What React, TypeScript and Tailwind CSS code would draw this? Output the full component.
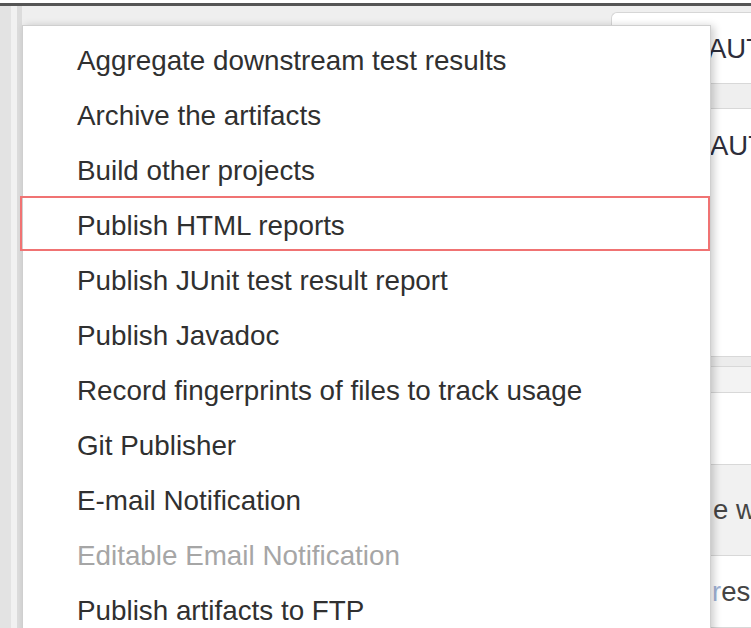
const items = [
  { label: "Aggregate downstream test results" },
  { label: "Archive the artifacts" },
  { label: "Build other projects" },
  { label: "Publish HTML reports", selected: true },
  { label: "Publish JUnit test result report" },
  { label: "Publish Javadoc" },
  { label: "Record fingerprints of files to track usage" },
  { label: "Git Publisher" },
  { label: "E-mail Notification" },
  { label: "Editable Email Notification", disabled: true },
  { label: "Publish artifacts to FTP" },
]

function SidePanel() {
  return (
    <div className="mt-[6px] flex min-w-0 flex-1 flex-col overflow-hidden rounded-tl-[6px] border-l border-t border-[#d6d6d6] bg-white pl-[96px] text-[27.5px] text-[#2d2d3a]">
      <div className="flex h-[70px] items-center whitespace-nowrap pt-[2px]">AUTHOR</div>
      <div className="h-[26px] border-y border-[#d8d8d8] bg-[#efefef]" />
      <div className="h-[247px] whitespace-nowrap pt-[16px] pl-[2px]">AUTHOR</div>
      <div className="h-[11px] border-y border-[#d8d8d8] bg-[#ececec]" />
      <div className="h-[26px] border-b border-[#d8d8d8] bg-[#f3f3f3]" />
      <div className="h-[71px]" />
      <div className="flex h-[92px] items-center whitespace-nowrap border-y border-[#d8d8d8] bg-[#f1f1f1] pl-[5px] text-[#444]">
        e w
      </div>
      <div className="flex h-[72px] items-center whitespace-nowrap border-b border-[#d8d8d8] pl-[4px] text-[#444]">
        <span className="text-[#9fb3d6]">r</span>es
      </div>
    </div>
  )
}

function AddMenu() {
  return (
    <div className="absolute left-[22px] top-[25px] w-[689px] border border-[#cfcfcf] bg-white pt-[5px] shadow-[3px_1px_8px_rgba(0,0,0,0.2)]">
      {items.map((item) => (
        <div
          key={item.label}
          className={
            item.selected
              ? "-ml-[3px] flex h-[55px] items-center whitespace-nowrap border-2 border-[#f07373] pl-[55px] pt-[4px]"
              : "flex h-[55px] items-center whitespace-nowrap pl-[54px] pt-[4px]"
          }
        >
          <span className={item.disabled ? "text-[#a6a6a6]" : "text-[#303030]"}>
            {item.label}
          </span>
        </div>
      ))}
    </div>
  )
}

export default function App() {
  return (
    <div
      className="relative flex h-[628px] w-[751px] flex-col overflow-hidden bg-white text-[27.8px]"
      style={{ fontFamily: '"Liberation Sans", Arial, sans-serif' }}
    >
      <div className="h-[3px] shrink-0 bg-white" />
      <div className="h-[3px] shrink-0 bg-[#555]" />
      <div className="flex min-w-0 flex-1 bg-[#efefef]">
        <div className="w-[11px] shrink-0 bg-[#e3e3e3]" />
        <div className="w-[6px] shrink-0 bg-[#f1f1f1]" />
        <div className="w-[5px] shrink-0 bg-[#dcdcdc]" />
        <div className="flex min-w-0 flex-1 pl-[589px]">
          <SidePanel />
        </div>
      </div>
      <AddMenu />
    </div>
  )
}
